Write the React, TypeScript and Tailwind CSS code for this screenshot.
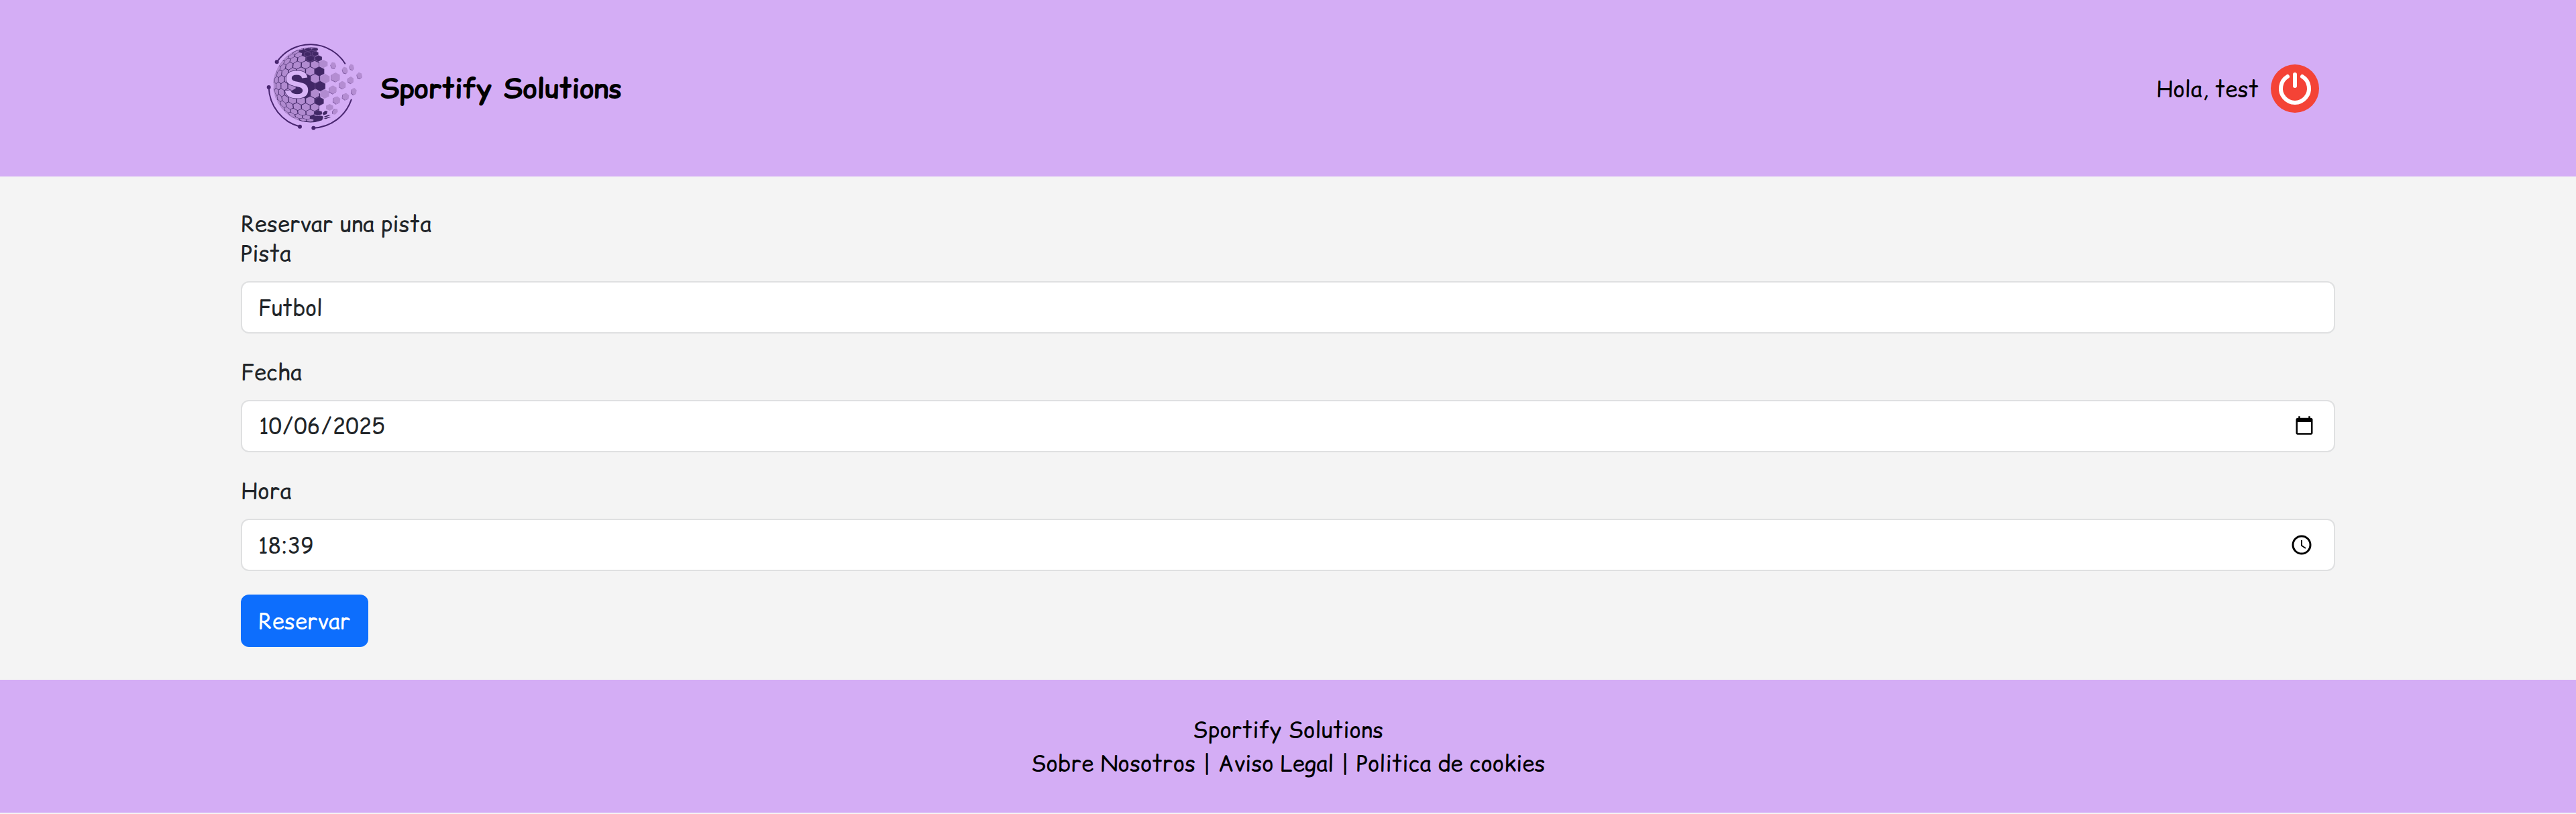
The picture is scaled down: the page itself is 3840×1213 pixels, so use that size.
import { useState } from "react";

const INK = "#412766";
const MAUVE = "#b18bd0";

type Point = [number, number];

const GLOBE_X = 248;
const GLOBE_Y = 260;
const GLOBE_R = 167;

// Cells of the globe's honeycomb that stay dark, as "row:column".
const DARK_CELLS = new Set(["0:-1", "0:-2", "1:0", "1:-1", "2:-1", "2:-2", "-3:0", "-4:0", "-4:-1", "-5:0", "-5:-1", "6:0"]);

function project(u: number, v: number): Point {
  const d = Math.hypot(u, v) || 1;
  const angle = Math.min(d / GLOBE_R, Math.PI / 2);
  const k = (GLOBE_R * Math.sin(angle)) / d;
  return [GLOBE_X + u * k, GLOBE_Y + v * k];
}

function globeCells(): string[] {
  const cells: string[] = [];
  for (let row = -6; row <= 7; row++) {
    const odd = Math.abs(row) % 2 === 1;
    for (let col = -6; col <= 0; col++) {
      if (DARK_CELLS.has(`${row}:${col}`)) continue;
      const u = (odd ? -1 : 21) + col * 43;
      const v = -29 + row * 34;
      if (Math.hypot(u, v) > GLOBE_R * 1.5) continue;
      const corners: Point[] = [
        [0, -21], [19, -11], [19, 11], [0, 21], [-19, 11], [-19, -11],
      ];
      cells.push(corners.map(([x, y]) => project(u + x, v + y).map((n) => n.toFixed(1)).join(",")).join(" "));
    }
  }
  return cells;
}

function hexagon(cx: number, cy: number, rx: number, ry: number): string {
  return [[0, -ry], [rx, -ry / 2], [rx, ry / 2], [0, ry], [-rx, ry / 2], [-rx, -ry / 2]]
    .map(([x, y]) => `${cx + x},${cy + y}`)
    .join(" ");
}

const DARK_HEXES = [
  [288, 199, 22, 22], [292, 265, 23, 24], [288, 333, 20, 20], [282, 385, 18, 12],
  [247, 141, 18, 15], [284, 141, 16, 14], [270, 120, 14, 11], [235, 122, 14, 11], [268, 101, 14, 7], [238, 102, 14, 8],
];
const LIGHT_HEXES = [
  [306, 166, 19, 18], [314, 232, 20, 22], [312, 300, 20, 21],
  [334, 360, 16, 15],
];
const FLOATING_HEXES = [
  [351, 172, 11, 15, -24], [403, 194, 11, 16, -18], [433, 180, 9, 14, -18], [468, 218, 11, 15, -12],
  [361, 225, 19, 21, 0], [429, 238, 12, 16, 0], [392, 260, 14, 18, 0], [349, 281, 16, 19, 0],
  [443, 289, 11, 16, 8], [406, 312, 14, 16, 8], [366, 328, 15, 18, 8], [359, 379, 9, 15, 42],
];

function Logo() {
  return (
    <svg viewBox="9 0 492 549" className="h-[183px] w-[164px] shrink-0" role="img" aria-label="Logo de Sportify Solutions">
      <g fill="none" stroke="#48256f" strokeWidth="6" strokeLinecap="round">
        <path d="M98 157A183 183 0 0 1 403 164" />
        <path d="M62 270A187 187 0 0 0 201 446" />
        <path d="M431 326A186 186 0 0 1 262 452" />
      </g>
      <g fill="#48256f">
        <circle cx="98" cy="157" r="9" />
        <circle cx="62" cy="270" r="9" />
        <circle cx="201" cy="446" r="9" />
        <circle cx="262" cy="452" r="9" />
      </g>
      <path d="M280 94Q262 90 240 92A168 168 0 0 0 240 427Q270 429 300 418L306 402L266 396L268 378L288 374V352L292 340V300L270 278V252L292 240V200L288 186V156L266 148Z" fill={INK} />
      <g fill={MAUVE}>
        {globeCells().map((points) => (
          <polygon key={points} points={points} />
        ))}
      </g>
      <g fill={INK} stroke="#9a79bd" strokeWidth="1">
        {DARK_HEXES.map(([x, y, rx, ry]) => (
          <polygon key={`${x}-${y}`} points={hexagon(x, y, rx, ry)} />
        ))}
      </g>
      <g fill={MAUVE}>
        {LIGHT_HEXES.map(([x, y, rx, ry]) => (
          <polygon key={`${x}-${y}`} points={hexagon(x, y, rx, ry)} />
        ))}
      </g>
      {FLOATING_HEXES.map(([x, y, rx, ry, turn]) => (
        <g key={`${x}-${y}`} transform={`rotate(${turn} ${x} ${y})`}>
          <polygon points={hexagon(x - 2, y + 2, rx, ry)} fill="#7d589f" />
          <polygon points={hexagon(x, y, rx, ry)} fill="#b48dd2" />
        </g>
      ))}
      <g fill={INK}>
        <path d="M302 386L314 375L325 377L321 390L307 395Z" />
        <path d="M272 405L290 397L304 399L298 408L274 412Z" />
        <path d="M307 402L330 393L338 394L316 405Z" />
        <path d="M270 417L300 410L306 412L288 420L270 423Z" />
        <path d="M306 411L332 402L340 403L318 412Z" />
      </g>
      <text
        x="187"
        y="318"
        textAnchor="middle"
        fontFamily="Liberation Sans, sans-serif"
        fontWeight="700"
        fontSize="172"
        fill="#d8b4f6"
        stroke={INK}
        strokeWidth="4"
        paintOrder="stroke"
      >
        S
      </text>
    </svg>
  );
}

function PowerIcon() {
  return (
    <svg viewBox="0 0 72 72" className="size-[72px]" aria-hidden="true">
      <circle cx="36" cy="36" r="36" fill="#f44336" />
      <g fill="none" stroke="#fff" strokeWidth="6" strokeLinecap="round">
        <path d="M36 15V32" />
        <path d="M25 18A21 21 0 1 0 47 18" />
      </g>
    </svg>
  );
}

function ClockIcon() {
  return (
    <svg viewBox="0 0 32 32" className="size-8" fill="none" stroke="#000" aria-hidden="true">
      <circle cx="16" cy="16" r="13" strokeWidth="3" />
      <path d="M16 9V17L22 21" strokeWidth="2" />
    </svg>
  );
}

const LABEL = "mb-5 block leading-11";
const INPUT =
  "block h-[78px] w-full rounded-xl border-2 border-[#dfe0e1] bg-white pr-[26px] pl-6 text-[32px] leading-11 text-[#212529] outline-none focus:border-[#86b7fe]";

export default function App() {
  const [court, setCourt] = useState("Futbol");
  const [date, setDate] = useState("2025-10-06");
  const [time, setTime] = useState("18:39");

  return (
    <div className="min-h-screen bg-[#f4f4f4] font-['Comic_Sans_MS','Comic_Relief','Comic_Neue','Noto_Sans',sans-serif] text-[33px] leading-11 text-[#212529]">
      <header className="bg-[#d4adf5] py-10 text-black">
        <div className="mx-auto flex w-full max-w-[3122px] items-center justify-between px-6">
          <div className="flex items-center gap-5">
            <Logo />
            <h1 className="text-[41px] leading-14 font-bold">Sportify Solutions</h1>
          </div>
          <div className="flex items-center gap-[18px]">
            <span>Hola, test</span>
            <button type="button" aria-label="Cerrar sesión" className="rounded-full">
              <PowerIcon />
            </button>
          </div>
        </div>
      </header>

      <main className="mx-auto w-full max-w-[3122px] pt-12 pb-[49px]">
        <h2>Reservar una pista</h2>
        <form onSubmit={(e) => e.preventDefault()}>
          <div className="mb-[35px]">
            <label htmlFor="pista" className={LABEL}>Pista</label>
            <input id="pista" type="text" className={INPUT} value={court} onChange={(e) => setCourt(e.target.value)} />
          </div>
          <div className="mb-[35px]">
            <label htmlFor="fecha" className={LABEL}>Fecha</label>
            <input id="fecha" type="date" className={INPUT} value={date} onChange={(e) => setDate(e.target.value)} />
          </div>
          <div className="mb-[35px]">
            <label htmlFor="hora" className={LABEL}>Hora</label>
            <div className="relative">
              <input id="hora" type="text" className={INPUT} value={time} onChange={(e) => setTime(e.target.value)} />
              <button type="button" aria-label="Elegir hora" className="absolute inset-y-0 right-[34px] flex items-center">
                <ClockIcon />
              </button>
            </div>
          </div>
          <button type="submit" className="h-[78px] rounded-xl bg-[#0d6efd] px-[26px] leading-11 text-white">
            Reservar
          </button>
        </form>
      </main>

      <footer className="bg-[#d4adf5] py-[49px] text-center leading-[50px] text-black">
        <p>Sportify Solutions</p>
        <nav>
          <a href="#nosotros">Sobre Nosotros</a> | <a href="#legal">Aviso Legal</a> | <a href="#cookies">Politica de cookies</a>
        </nav>
      </footer>
    </div>
  );
}
